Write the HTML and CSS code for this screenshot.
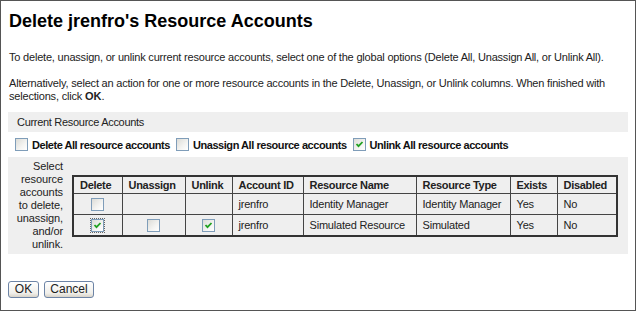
FILE: index.html
```html
<!DOCTYPE html>
<html lang="en">
<head>
    <meta charset="UTF-8">
    <title>Delete Resource Accounts</title>
    <link rel="stylesheet" href="styles.css">
</head>
<body>

<div class="page">
    <h1>Delete jrenfro's Resource Accounts</h1>

    <p class="intro">To delete, unassign, or unlink current resource accounts, select one of the global options (Delete All, Unassign All, or Unlink All).</p>
    <p class="intro">Alternatively, select an action for one or more resource accounts in the Delete, Unassign, or Unlink columns. When finished with selections, click <b>OK</b>.</p>

    <!-- Current accounts -->
    <div class="section">
        <div class="section-title">Current Resource Accounts</div>

        <div class="global-options">
            <label class="option"><span class="cb"></span>Delete All resource accounts</label>
            <label class="option"><span class="cb"></span>Unassign All resource accounts</label>
            <label class="option"><span class="cb checked"><svg viewBox="0 0 11 11"><path d="M2.5 5 L4.5 7.2 L8.5 3"/></svg></span>Unlink All resource accounts</label>
        </div>

        <div class="accounts-panel">
            <div class="panel-label">Select resource accounts to delete, unassign, and/or unlink.</div>

            <table class="accounts">
                <colgroup>
                    <col style="width:49px">
                    <col style="width:63px">
                    <col style="width:47px">
                    <col style="width:71px">
                    <col style="width:113px">
                    <col style="width:94px">
                    <col style="width:47px">
                    <col style="width:60px">
                </colgroup>
                <tr>
                    <th>Delete</th>
                    <th>Unassign</th>
                    <th>Unlink</th>
                    <th>Account ID</th>
                    <th>Resource Name</th>
                    <th>Resource Type</th>
                    <th>Exists</th>
                    <th>Disabled</th>
                </tr>
                <tr>
                    <td class="center"><span class="cb"></span></td>
                    <td></td>
                    <td></td>
                    <td>jrenfro</td>
                    <td>Identity Manager</td>
                    <td>Identity Manager</td>
                    <td>Yes</td>
                    <td>No</td>
                </tr>
                <tr>
                    <td class="center"><span class="cb checked focused"><svg viewBox="0 0 11 11"><path d="M2.5 5 L4.5 7.2 L8.5 3"/></svg></span></td>
                    <td class="center"><span class="cb"></span></td>
                    <td class="center"><span class="cb checked"><svg viewBox="0 0 11 11"><path d="M2.5 5 L4.5 7.2 L8.5 3"/></svg></span></td>
                    <td>jrenfro</td>
                    <td>Simulated Resource</td>
                    <td>Simulated</td>
                    <td>Yes</td>
                    <td>No</td>
                </tr>
            </table>
        </div>
    </div>

    <div class="buttons">
        <button class="btn ok-btn">OK</button>
        <button class="btn cancel-btn">Cancel</button>
    </div>
</div>

</body>
</html>
```

FILE: styles.css
```css
/* Global Styles */
* {
    margin: 0;
    padding: 0;
    box-sizing: border-box;
}

body {
    background-color: #ffffff;
    font-family: "Liberation Sans", Arial, sans-serif;
    font-size: 11px;
    color: #222;
}

/* Page frame */
.page {
    width: 636px;
    height: 311px;
    border: 1px solid #555;
    padding: 0 7px;
}

h1 {
    font-size: 18px;
    font-weight: bold;
    color: #000;
    line-height: 22px;
    padding-top: 9px;
    margin-bottom: 19px;
    margin-left: 1px;
}

.intro {
    line-height: 13px;
    letter-spacing: -0.2px;
    margin-left: 1px;
    margin-bottom: 13px;
}

.intro b {
    letter-spacing: 0;
}

/* Section */
.section-title {
    background-color: #efefef;
    height: 20px;
    line-height: 20px;
    padding-left: 9px;
    letter-spacing: -0.3px;
    margin-top: -4px;
}

.global-options {
    display: flex;
    align-items: center;
    height: 25px;
    padding-left: 7px;
    gap: 6px;
}

.option {
    display: flex;
    align-items: center;
    gap: 4px;
    font-weight: bold;
    letter-spacing: -0.45px;
    color: #111;
}

/* Checkbox look */
.cb {
    display: inline-block;
    width: 13px;
    height: 13px;
    border: 1px solid #7f9db9;
    background: linear-gradient(135deg, #dcdcd7 0%, #f4f4f2 60%, #ffffff 100%);
    vertical-align: middle;
}

.cb svg {
    display: block;
    width: 11px;
    height: 11px;
}

.cb svg path {
    fill: none;
    stroke: #21a121;
    stroke-width: 1.8;
}

.cb.focused {
    outline: 1px dotted #666;
    outline-offset: 0;
}

/* Accounts panel */
.accounts-panel {
    display: flex;
    align-items: center;
    background-color: #efefef;
    padding: 3px 0;
    height: 97px;
}

.panel-label {
    width: 50px;
    margin-left: 5px;
    margin-right: 9px;
    text-align: right;
    line-height: 13px;
    letter-spacing: -0.1px;
    color: #222;
}

.accounts {
    border-collapse: collapse;
    table-layout: fixed;
    border: 2px solid #333;
}

.accounts th,
.accounts td {
    border: 1px solid #444;
    text-align: left;
    padding: 0 6px;
    letter-spacing: -0.2px;
    white-space: nowrap;
}

.accounts th {
    height: 18px;
    font-weight: bold;
    letter-spacing: -0.3px;
}

.accounts td {
    height: 21px;
}

.accounts td.center {
    text-align: center;
    padding: 0;
}

/* Buttons */
.buttons {
    display: flex;
    gap: 5px;
    margin-top: 27px;
}

.btn {
    height: 17px;
    padding: 0;
    font-family: "Liberation Sans", Arial, sans-serif;
    font-size: 12px;
    color: #222;
    border: 1px solid #6d84a6;
    border-radius: 3px;
    background: linear-gradient(#ffffff, #f0efea 75%, #d8d3c8);
    line-height: 15px;
}

.ok-btn {
    width: 31px;
}

.cancel-btn {
    width: 50px;
}
```
